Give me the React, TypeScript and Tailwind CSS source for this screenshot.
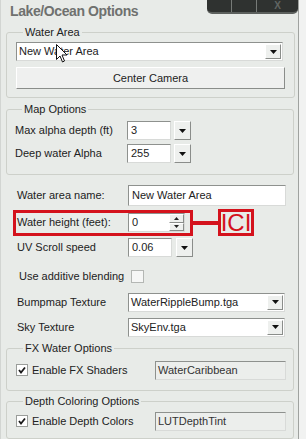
import type { ReactNode } from 'react'

const sunken =
    'border border-t-[#8e918e] border-l-[#8e918e] border-r-[#d8dad8] border-b-[#d8dad8]'
const raised =
    'border border-t-white border-l-white border-r-[#8a8d8a] border-b-[#8a8d8a]'

function Arrow() {
    return (
        <svg width="7" height="4" viewBox="0 0 7 4">
            <polygon points="0,0 7,0 3.5,4" fill="#111" />
        </svg>
    )
}

function DropButton({ className = '' }: { className?: string }) {
    return (
        <div className={`flex items-center justify-center bg-[#eef0ee] ${raised} ${className}`}>
            <Arrow />
        </div>
    )
}

function Combo({ value, width }: { value: string; width: string }) {
    return (
        <div className={`flex h-[19px] items-center bg-white ${sunken} ${width}`}>
            <span className="flex-1 pl-[2px] leading-[13px]">{value}</span>
            <DropButton className="mr-[1px] h-[15px] w-[16px]" />
        </div>
    )
}

function SmallSelect({ value }: { value: string }) {
    return (
        <div className="flex items-center gap-[3px]">
            <div className={`flex h-[19px] w-[44px] items-center bg-white pl-[3px] ${sunken}`}>
                {value}
            </div>
            <DropButton className="h-[19px] w-[17px]" />
        </div>
    )
}

function Check({ checked }: { checked?: boolean }) {
    return (
        <div className="flex h-[12px] w-[12px] items-center justify-center border border-[#9a9d9a] bg-white">
            {checked && (
                <svg width="8" height="8" viewBox="0 0 8 8">
                    <path d="M1 4 L3 6.5 L7 1.5" stroke="#1a1a1a" strokeWidth="1.8" fill="none" />
                </svg>
            )}
        </div>
    )
}

function Group({ title, children, className = '' }: { title: string; children: ReactNode; className?: string }) {
    return (
        <fieldset className={`w-[288px] rounded-[3px] border border-[#cdd0ca] ${className}`}>
            <legend className="ml-[7px] px-[2px] leading-[13px] text-[#222]">{title}</legend>
            {children}
        </fieldset>
    )
}

function Cursor() {
    return (
        <svg
            className="absolute left-[56px] top-[44px]"
            width="12"
            height="19"
            viewBox="0 0 12 19"
        >
            <path
                d="M0.5 0.5 L0.5 15.5 L4 12 L6.5 18 L8.5 17 L6 11 L11 11 Z"
                fill="white"
                stroke="#111"
                strokeWidth="1"
            />
        </svg>
    )
}

export default function App() {
    return (
        <div className="relative flex h-[439px] w-[306px] overflow-hidden bg-[#e8ebe8] font-[family-name:'Liberation_Sans',Arial,sans-serif] text-[11px] text-[#222]">
            <div className="flex w-[299px] flex-col border-r border-l border-r-[#9fa29f] border-l-[#d2d5d2] pl-[5px]">
                <div className="flex h-[26px] items-start">
                    <span className="pl-[4px] pt-[3px] text-[14px] font-bold leading-[16px] tracking-[-0.4px] text-[#6f716f]">
                        Lake/Ocean Options
                    </span>
                    <div className="ml-auto flex h-[14px] w-[91px] overflow-hidden rounded-b-[5px] border-b-2 border-[#5c605d] bg-[#2f3230]">
                        <div className="w-[25px] border-r border-[#777b78]" />
                        <div className="w-[25px] border-r border-[#777b78]" />
                        <div className="flex flex-1 items-start justify-center text-[10px] font-bold leading-[11px] text-[#616562]">
                            X
                        </div>
                    </div>
                </div>

                <Group title="Water Area" className="px-[9px] pt-[3px] pb-[8px]">
                    <Combo value="New Water Area" width="w-[267px]" />
                    <button
                        className={`mt-[6px] flex h-[22px] w-[269px] items-center justify-center bg-[#eff0ef] ${raised} text-[11px]`}
                    >
                        Center Camera
                    </button>
                </Group>

                <Group title="Map Options" className="mt-[5px] flex flex-col gap-[4px] pl-[8px] pt-[5px] pb-[11px]">
                    <div className="flex items-center">
                        <span className="w-[112px]">Max alpha depth (ft)</span>
                        <SmallSelect value="3" />
                    </div>
                    <div className="flex items-center">
                        <span className="w-[112px]">Deep water Alpha</span>
                        <SmallSelect value="255" />
                    </div>
                </Group>

                <div className="mt-[10px] flex items-center pl-[11px]">
                    <span className="w-[111px]">Water area name:</span>
                    <div className={`flex h-[21px] w-[158px] items-center bg-white pl-[3px] ${sunken}`}>
                        New Water Area
                    </div>
                </div>

                <div className="mt-[3px] ml-[7px] flex items-center">
                    <div className="flex h-[26px] w-[180px] items-center border-[3px] border-[#d4121c] pl-[1px]">
                        <span className="w-[111px]">Water height (feet):</span>
                        <div className={`flex h-[19px] w-[57px] items-center bg-white pl-[3px] ${sunken}`}>
                            <span className="flex-1">0</span>
                            <div className="flex h-full w-[15px] flex-col">
                                <div className={`flex flex-1 items-center justify-center bg-[#eef0ee] ${raised}`}>
                                    <svg width="5" height="3" viewBox="0 0 5 3">
                                        <polygon points="2.5,0 5,3 0,3" fill="#222" />
                                    </svg>
                                </div>
                                <div className={`flex flex-1 items-center justify-center bg-[#eef0ee] ${raised}`}>
                                    <svg width="5" height="3" viewBox="0 0 5 3">
                                        <polygon points="0,0 5,0 2.5,3" fill="#222" />
                                    </svg>
                                </div>
                            </div>
                        </div>
                    </div>
                    <div className="h-[4px] w-[25px] bg-[#d4121c]" />
                    <div className="flex h-[27px] w-[36px] items-center justify-center border-[3px] border-[#d4121c] text-[24px] leading-none text-[#d4121c]">
                        ICI
                    </div>
                </div>

                <div className="mt-[2px] flex items-center pl-[11px]">
                    <span className="w-[111px]">UV Scroll speed</span>
                    <div className="flex items-center gap-[4px]">
                        <div className={`flex h-[19px] w-[44px] items-center bg-white pl-[3px] ${sunken}`}>
                            0.06
                        </div>
                        <DropButton className="h-[19px] w-[17px]" />
                    </div>
                </div>

                <div className="mt-[11px] flex items-center pl-[13px]">
                    <span className="w-[112px]">Use additive blending</span>
                    <div className="h-[13px] w-[13px] border border-[#b4b7b4] bg-[#f6f7f6]" />
                </div>

                <div className="mt-[8px] flex items-center pl-[11px]">
                    <span className="w-[111px]">Bumpmap Texture</span>
                    <Combo value="WaterRippleBump.tga" width="w-[157px]" />
                </div>
                <div className="mt-[6px] flex items-center pl-[11px]">
                    <span className="w-[111px]">Sky Texture</span>
                    <Combo value="SkyEnv.tga" width="w-[157px]" />
                </div>

                <Group title="FX Water Options" className="mt-[5px] pl-[9px] pt-[6px] pb-[10px]">
                    <div className="flex items-center">
                        <div className="flex w-[139px] items-center gap-[4px]">
                            <Check checked />
                            <span>Enable FX Shaders</span>
                        </div>
                        <div className={`flex h-[19px] w-[131px] items-center bg-[#eceeec] pl-[2px] text-[#333] ${sunken}`}>
                            WaterCaribbean
                        </div>
                    </div>
                </Group>

                <Group title="Depth Coloring Options" className="mt-[4px] pl-[9px] pt-[4px] pb-[7px]">
                    <div className="flex items-center">
                        <div className="flex w-[139px] items-center gap-[4px]">
                            <Check checked />
                            <span>Enable Depth Colors</span>
                        </div>
                        <div className={`flex h-[19px] w-[131px] items-center bg-[#eceeec] pl-[2px] text-[#333] ${sunken}`}>
                            LUTDepthTint
                        </div>
                    </div>
                </Group>
            </div>
            <div className="flex-1 bg-[#f1f2f1]" />
            <Cursor />
        </div>
    )
}
